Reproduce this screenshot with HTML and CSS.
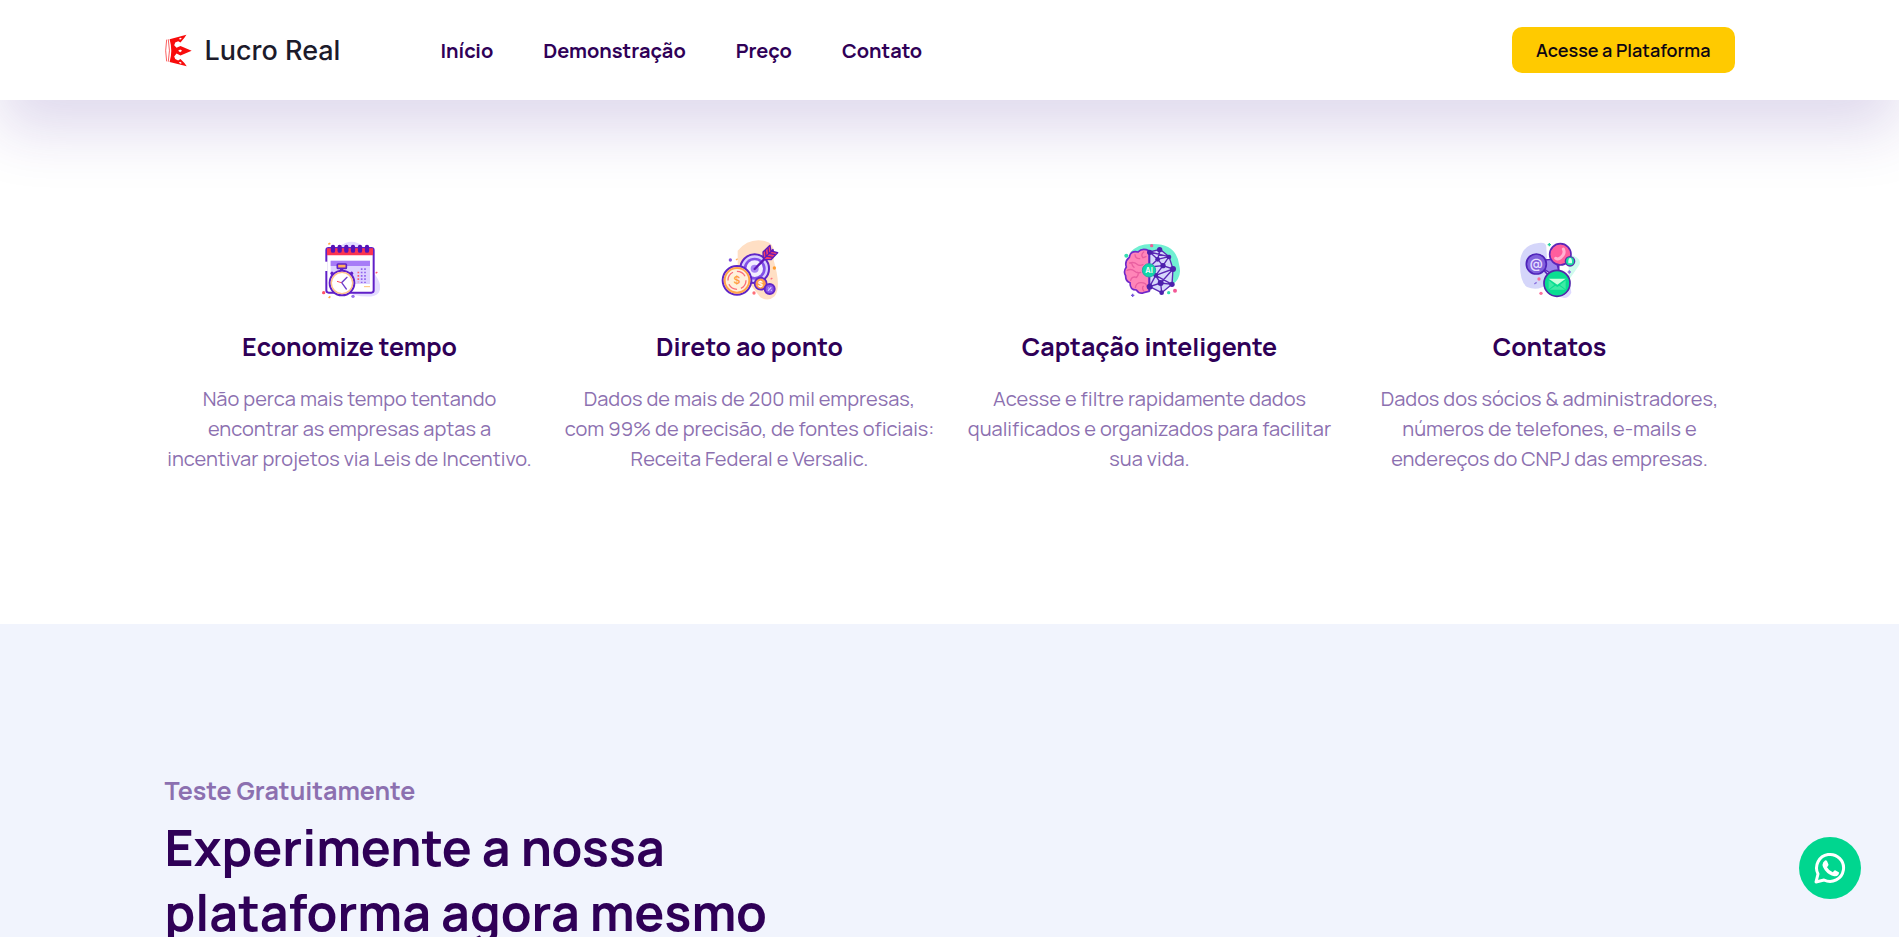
FILE: index.html
```html
<!DOCTYPE html>
<html lang="pt-BR">
<head>
    <meta charset="UTF-8">
    <meta name="viewport" content="width=device-width, initial-scale=1.0">
    <title>Lucro Real</title>
    <link rel="stylesheet" href="styles.css">
</head>
<body>
    <header class="header">
        <div class="container header-inner">
            <a href="#" class="logo">
                <svg class="logo-mark" viewBox="44 41 82 98" aria-hidden="true">
                    <path fill="#f80c0c" d="M58 56 L109 42 L103 51 L91 66 L84 62 L75 66 L72 74 L79 82 L91 76 L125 91 L91 105 L79 99 L72 108 L75 116 L84 120 L91 116 L103 128 L110 138 L58 125 Q68 91 58 56Z"/>
                    <path fill="#fff" d="M86 54l6-3 3 2-5 4zM86 127l6 3 3-2-5-4zM84 91l6-4 6 4-6 4z"/>
                    <path fill="none" stroke="#f80c0c" stroke-width="2" d="M49 57Q43 91 49 123M54 56Q61 91 54 124"/>
                </svg>
                <span>Lucro Real</span>
            </a>
            <nav class="nav">
                <a href="#inicio">Início</a>
                <a href="#demonstracao">Demonstração</a>
                <a href="#preco">Preço</a>
                <a href="#contato">Contato</a>
            </nav>
            <a href="#" class="btn-plataforma">Acesse a Plataforma</a>
        </div>
    </header>

    <main>
        <section class="features" id="inicio">
            <div class="container features-row">
                <div class="feature">
                    <svg class="feature-icon" viewBox="30 30 180 180" aria-hidden="true">
                        <path fill="#e3dcff" d="M88 50Q125 20 160 50L192 130Q220 165 206 188Q190 208 130 194Z"/>
                        <rect x="49" y="54" width="142" height="134" rx="7" fill="#fff" stroke="#6020c8" stroke-width="6"/>
                        <path fill="#fb3550" d="M51 55h138v21H51z"/>
                        <path fill="#ddd2ff" d="M62 92h118v70H62z"/>
                        <path fill="#a77cf7" d="M62 92h118v16H62z"/>
                        <path stroke="#5512b8" stroke-width="13" stroke-linecap="round" d="M69 51v11M89 51v11M109 51v11M129 51v11M150 51v11M171 51v11"/>
                        <path fill="none" stroke="#9162ed" stroke-width="5" stroke-dasharray="5 5" d="M155 115v44M165 115v44"/>
                        <path stroke="#ff5b6d" stroke-width="5" stroke-dasharray="5 5" d="M145 125v32"/>
                        <path stroke="#ffc375" stroke-width="3" d="M162 170h18"/>
                        <path stroke="#6020c8" stroke-width="10" stroke-linecap="round" d="M95 115v10M66 130l7 7M125 130l-7 7"/>
                        <rect x="82" y="102" width="27" height="13" rx="2" fill="#ffb05d" stroke="#6020c8" stroke-width="5"/>
                        <circle cx="96" cy="159" r="37" fill="#fff" stroke="#6020c8" stroke-width="6"/>
                        <circle cx="96" cy="159" r="32" fill="#fff" stroke="#ffc18a" stroke-width="4"/>
                        <path fill="none" stroke="#7040cb" stroke-width="4" stroke-linecap="round" d="M111 142L95 158L109 177"/>
                        <path stroke="#ff4860" stroke-width="3" d="M81 154l13 4"/>
                        <path stroke="#fff" stroke-width="8" d="M49 95v28"/>
                        <circle cx="41" cy="188" r="5" fill="#ff5368"/>
                        <circle cx="129" cy="199" r="5" fill="#9671ec"/>
                        <path stroke="#ffad4c" stroke-width="5" d="M56 204l5-5M55 43l6-3"/>
                        <path stroke="#ff5368" stroke-width="4" d="M197 130l5-4"/>
                    </svg>
                    <h3>Economize tempo</h3>
                    <p>Não perca mais tempo tentando encontrar as empresas aptas a incentivar projetos via Leis de Incentivo.</p>
                </div>
                <div class="feature">
                    <svg class="feature-icon" viewBox="30 30 180 180" aria-hidden="true">
                        <path fill="#ffdfc4" d="M83 62Q116 23 164 33Q200 39 191 91Q215 172 194 199Q176 216 151 202L83 116Z"/>
                        <circle cx="134" cy="116" r="43" fill="#d9ceff" stroke="#5f25c7" stroke-width="6"/>
                        <circle cx="134" cy="116" r="33" fill="#8250e8"/>
                        <circle cx="134" cy="116" r="25" fill="#f2eeff"/>
                        <circle cx="134" cy="116" r="12" fill="#a884f4"/>
                        <path fill="none" stroke="#5d18ba" stroke-width="7" stroke-linecap="round" d="M134 117L188 62"/>
                        <path fill="#f53d69" stroke="#5d18ba" stroke-width="4" stroke-linejoin="round" d="M160 85L159 66L180 46L183 63L203 68L183 89L163 88Z"/>
                        <path fill="none" stroke="#5d18ba" stroke-width="4" d="M160 88L190 58M166 60l2 18 20 4M174 53l2 17 19 4"/>
                        <circle cx="81" cy="151" r="43" fill="#fff0dc" stroke="#5f25c7" stroke-width="6"/>
                        <circle cx="81" cy="151" r="37" fill="none" stroke="#ffa44b" stroke-width="6"/>
                        <circle cx="81" cy="151" r="27" fill="none" stroke="#fb6d7a" stroke-width="4" stroke-dasharray="30 12"/>
                        <text class="coin" x="81" y="162">$</text>
                        <circle cx="152" cy="161" r="18" fill="#ff9d4c" stroke="#5f25c7" stroke-width="5"/>
                        <text class="coin coin-small" x="152" y="170">$</text>
                        <circle cx="179" cy="177" r="15" fill="#8957ea" stroke="#5f25c7" stroke-width="6"/>
                        <path stroke="#d5c5ff" stroke-width="4" d="M174 182l10-10M174 173l2 2M183 180l2 2"/>
                        <circle cx="61" cy="90" r="5" fill="#8054dd"/>
                        <circle cx="193" cy="114" r="5" fill="#ff9f31"/>
                        <circle cx="132" cy="189" r="5" fill="#ff6e78"/>
                        <path stroke="#ffad5b" stroke-width="4" d="M78 90l5-4"/>
                        <path stroke="#ff7080" stroke-width="4" d="M182 148l5-4"/>
                    </svg>
                    <h3>Direto ao ponto</h3>
                    <p>Dados de mais de 200 mil empresas, com 99% de precisão, de fontes oficiais: Receita Federal e Versalic.</p>
                </div>
                <div class="feature">
                    <svg class="feature-icon" viewBox="30 30 180 180" aria-hidden="true">
                        <path fill="#71efd2" d="M61 67Q85 39 131 42Q201 43 208 107Q217 143 186 165L115 145Z"/>
                        <path fill="#ff85b8" stroke="#7028ca" stroke-width="5" d="M117 62Q97 52 84 66Q61 61 58 82Q43 94 49 111Q39 125 47 137Q46 153 60 158Q60 180 79 180Q88 193 101 188L117 184Z"/>
                        <path fill="none" stroke="#e95fa0" stroke-width="4" stroke-linecap="round" d="M75 74Q76 87 89 86M101 66Q91 75 99 83L108 80M59 99Q72 95 80 102T99 104M51 121Q64 115 73 123T92 127M62 151Q65 138 80 142M76 173Q78 158 93 158T110 168M101 183Q95 174 100 169M72 112Q66 107 65 99M78 143Q88 135 83 127"/>
                        <path fill="#d6d8fb" d="M119 66l31-8 27 22 12 37-3 46-31 23-36-16z"/>
                        <path fill="none" stroke="#5a28b5" stroke-width="4" stroke-linejoin="round" d="M119 184V66l31-8 27 22 12 37-3 46-31 25-36-18M119 66l58 14-34 8-24-22M150 58l-7 30-24 23 40-4-16-19M177 80l-18 27 30 10-52 19 22-29M137 136l52-19-37 42 34 4M119 170l18-34 15 23-33 11 36 18-3-29-33-48M189 117l-37 42M137 136l49 27"/>
                        <g fill="#4c20ac">
                            <circle cx="119" cy="67" r="8"/>
                            <circle cx="149" cy="59" r="8"/>
                            <circle cx="177" cy="81" r="7"/>
                            <circle cx="143" cy="88" r="7"/>
                            <circle cx="159" cy="107" r="8"/>
                            <circle cx="189" cy="117" r="9"/>
                            <circle cx="137" cy="136" r="7"/>
                            <circle cx="152" cy="159" r="9"/>
                            <circle cx="186" cy="163" r="8"/>
                            <circle cx="119" cy="170" r="9"/>
                            <circle cx="155" cy="188" r="7"/>
                        </g>
                        <circle cx="117" cy="121" r="20" fill="#13d8a8" stroke="#24a9a7" stroke-width="3"/>
                        <text class="ai" x="117" y="129">AI</text>
                        <circle cx="49" cy="77" r="6" fill="#37ddb0"/>
                        <circle cx="125" cy="47" r="5" fill="#f35896"/>
                        <circle cx="195" cy="182" r="6" fill="#f35896"/>
                        <circle cx="176" cy="188" r="5" fill="#37ddb0"/>
                        <path stroke="#7859db" stroke-width="4" d="M68 191v10M63 196h10"/>
                    </svg>
                    <h3>Captação inteligente</h3>
                    <p>Acesse e filtre rapidamente dados qualificados e organizados para facilitar sua vida.</p>
                </div>
                <div class="feature">
                    <svg class="feature-icon" viewBox="30 30 180 180" aria-hidden="true">
                        <path fill="#d5d6fa" d="M30 103Q29 45 86 39Q111 36 109 54L116 160Q85 186 51 171Q30 157 30 103Z"/>
                        <path fill="#cffbed" d="M176 73Q217 83 208 105L176 151Z"/>
                        <path fill="#ded9ff" d="M126 187L177 134L184 188Q170 216 141 196Z"/>
                        <path fill="#9b86ec" stroke="#5c26bb" stroke-width="4" d="M104 90l20-2 17 14 6 23-22 7-22-14z"/>
                        <path stroke="#5c26bb" stroke-width="5" d="M99 118l18 20M146 100v27"/>
                        <circle cx="79" cy="102" r="30" fill="#8060dc" stroke="#4e22b9" stroke-width="5"/>
                        <text class="at" x="79" y="115">@</text>
                        <circle cx="151" cy="73" r="32" fill="#ff5e9d" stroke="#5c26b8" stroke-width="5"/>
                        <path fill="none" stroke="#ffb3d2" stroke-width="9" stroke-linecap="round" d="M160 57Q167 71 153 82Q145 90 137 85"/>
                        <circle cx="180" cy="94" r="14" fill="#18dca1" stroke="#5731aa" stroke-width="4"/>
                        <path fill="#d2ffed" d="M176 91v-4q5-6 9 0v4h1v9h-11v-9z"/>
                        <circle cx="141" cy="160" r="39" fill="#0add91" stroke="#5126aa" stroke-width="5"/>
                        <path fill="#caffdd" d="M116 146h51l-25 18z"/>
                        <path fill="#3feaa5" d="M116 151l17 14-17 13zM167 151l-17 14 17 13zM119 179l17-12 6 4 6-4 17 12z"/>
                        <path stroke="#27d59c" stroke-width="4" d="M118 39v10M113 44h10"/>
                        <circle cx="87" cy="147" r="5" fill="#fc709e"/>
                        <circle cx="93" cy="190" r="5" fill="#fc709e"/>
                        <path stroke="#8c73df" stroke-width="4" d="M73 162l7-5M178 121v10M173 126h10"/>
                    </svg>
                    <h3>Contatos</h3>
                    <p>Dados dos sócios &amp; administradores, números de telefones, e-mails e endereços do CNPJ das empresas.</p>
                </div>
            </div>
        </section>

        <section class="teste" id="demonstracao">
            <div class="container">
                <div class="teste-text">
                    <h4>Teste Gratuitamente</h4>
                    <h2>Experimente a nossa plataforma agora mesmo</h2>
                </div>
            </div>
        </section>
    </main>

    <a href="#contato" class="whatsapp" aria-label="WhatsApp">
        <svg viewBox="0 0 32 32" aria-hidden="true">
            <path fill="none" stroke="#fff" stroke-width="3" stroke-linejoin="round" d="M2 30l2-8A13.500 13.500 0 1 1 10 28z"/>
            <path fill="#fff" d="M11 8.500q1-.7 2 .4l1.500 3.600q.3.800-1.500 2.800 2 3.600 5.800 5 1.700-2.300 2.300-2l3.700 1.900q.7.400-.4 2.500-1.400 1.900-4.200 1.500-5.200-.8-9.300-6-4.800-6 .1-9.700z"/>
        </svg>
    </a>
</body>
</html>
```
FILE: styles.css
```css
* {
    box-sizing: border-box;
}

body {
    font-family: Manrope, Inter, sans-serif;
    margin: 0;
    color: #2f0057;
    background-color: #fff;
}

a {
    text-decoration: none;
}

h2, h3, h4, p {
    margin: 0;
}

.container {
    max-width: 1600px;
    margin: 0 auto;
    padding: 0 15px;
}

/* Header */
.header {
    position: sticky;
    top: 0;
    z-index: 10;
    background-color: #fff;
    box-shadow: 0 30px 60px rgba(65, 30, 150, 0.17);
}

.header-inner {
    display: flex;
    align-items: center;
    min-height: 100px;
}

.logo {
    display: flex;
    align-items: center;
    gap: 13px;
    font-family: Inter, sans-serif;
    font-size: 27px;
    font-weight: 500;
    color: #1c1b2b;
}

.logo-mark {
    width: 27px;
    height: 33px;
}

.nav {
    display: flex;
    gap: 50px;
    margin-left: 100px;
}

.nav a {
    font-size: 20px;
    font-weight: 700;
    color: #2f0057;
}

.btn-plataforma {
    margin-left: auto;
    padding: 12px 24px;
    border-radius: 10px;
    background-color: #ffca00;
    color: #0d0613;
    font-size: 18px;
    font-weight: 600;
    line-height: 22px;
}

/* Features */
.features {
    padding: 140px 0 150px;
}

.features-row {
    display: grid;
    grid-template-columns: repeat(4, 1fr);
    gap: 30px;
}

.feature {
    text-align: center;
}

.feature-icon {
    display: block;
    width: 60px;
    height: 60px;
    margin: 0 auto 30px;
}

.feature h3 {
    margin-bottom: 21px;
    font-size: 25px;
    font-weight: 700;
    line-height: 33px;
}

.feature p {
    font-size: 20px;
    font-weight: 400;
    line-height: 30px;
    color: #8c70b0;
}

.coin, .ai, .at {
    font-family: Inter, sans-serif;
    font-weight: 600;
    text-anchor: middle;
}

.coin {
    font-size: 32px;
    fill: #ff9d45;
}

.coin-small {
    font-size: 24px;
    fill: #fff;
}

.ai {
    font-size: 22px;
    fill: #fff;
}

.at {
    font-size: 39px;
    fill: #e5dcff;
}

/* Teste */
.teste {
    padding: 150px 0;
    background-color: #f1f4fd;
}

.teste-text {
    max-width: 660px;
}

.teste h4 {
    margin-bottom: 8px;
    font-size: 25px;
    font-weight: 700;
    line-height: 33px;
    color: #8c70b0;
}

.teste h2 {
    font-size: 50px;
    font-weight: 700;
    line-height: 65px;
}

/* WhatsApp */
.whatsapp {
    position: fixed;
    right: 38px;
    bottom: 38px;
    z-index: 20;
    display: flex;
    align-items: center;
    justify-content: center;
    width: 62px;
    height: 62px;
    border-radius: 50%;
    background-color: #00d68f;
}

.whatsapp svg {
    width: 32px;
    height: 32px;
}
```
